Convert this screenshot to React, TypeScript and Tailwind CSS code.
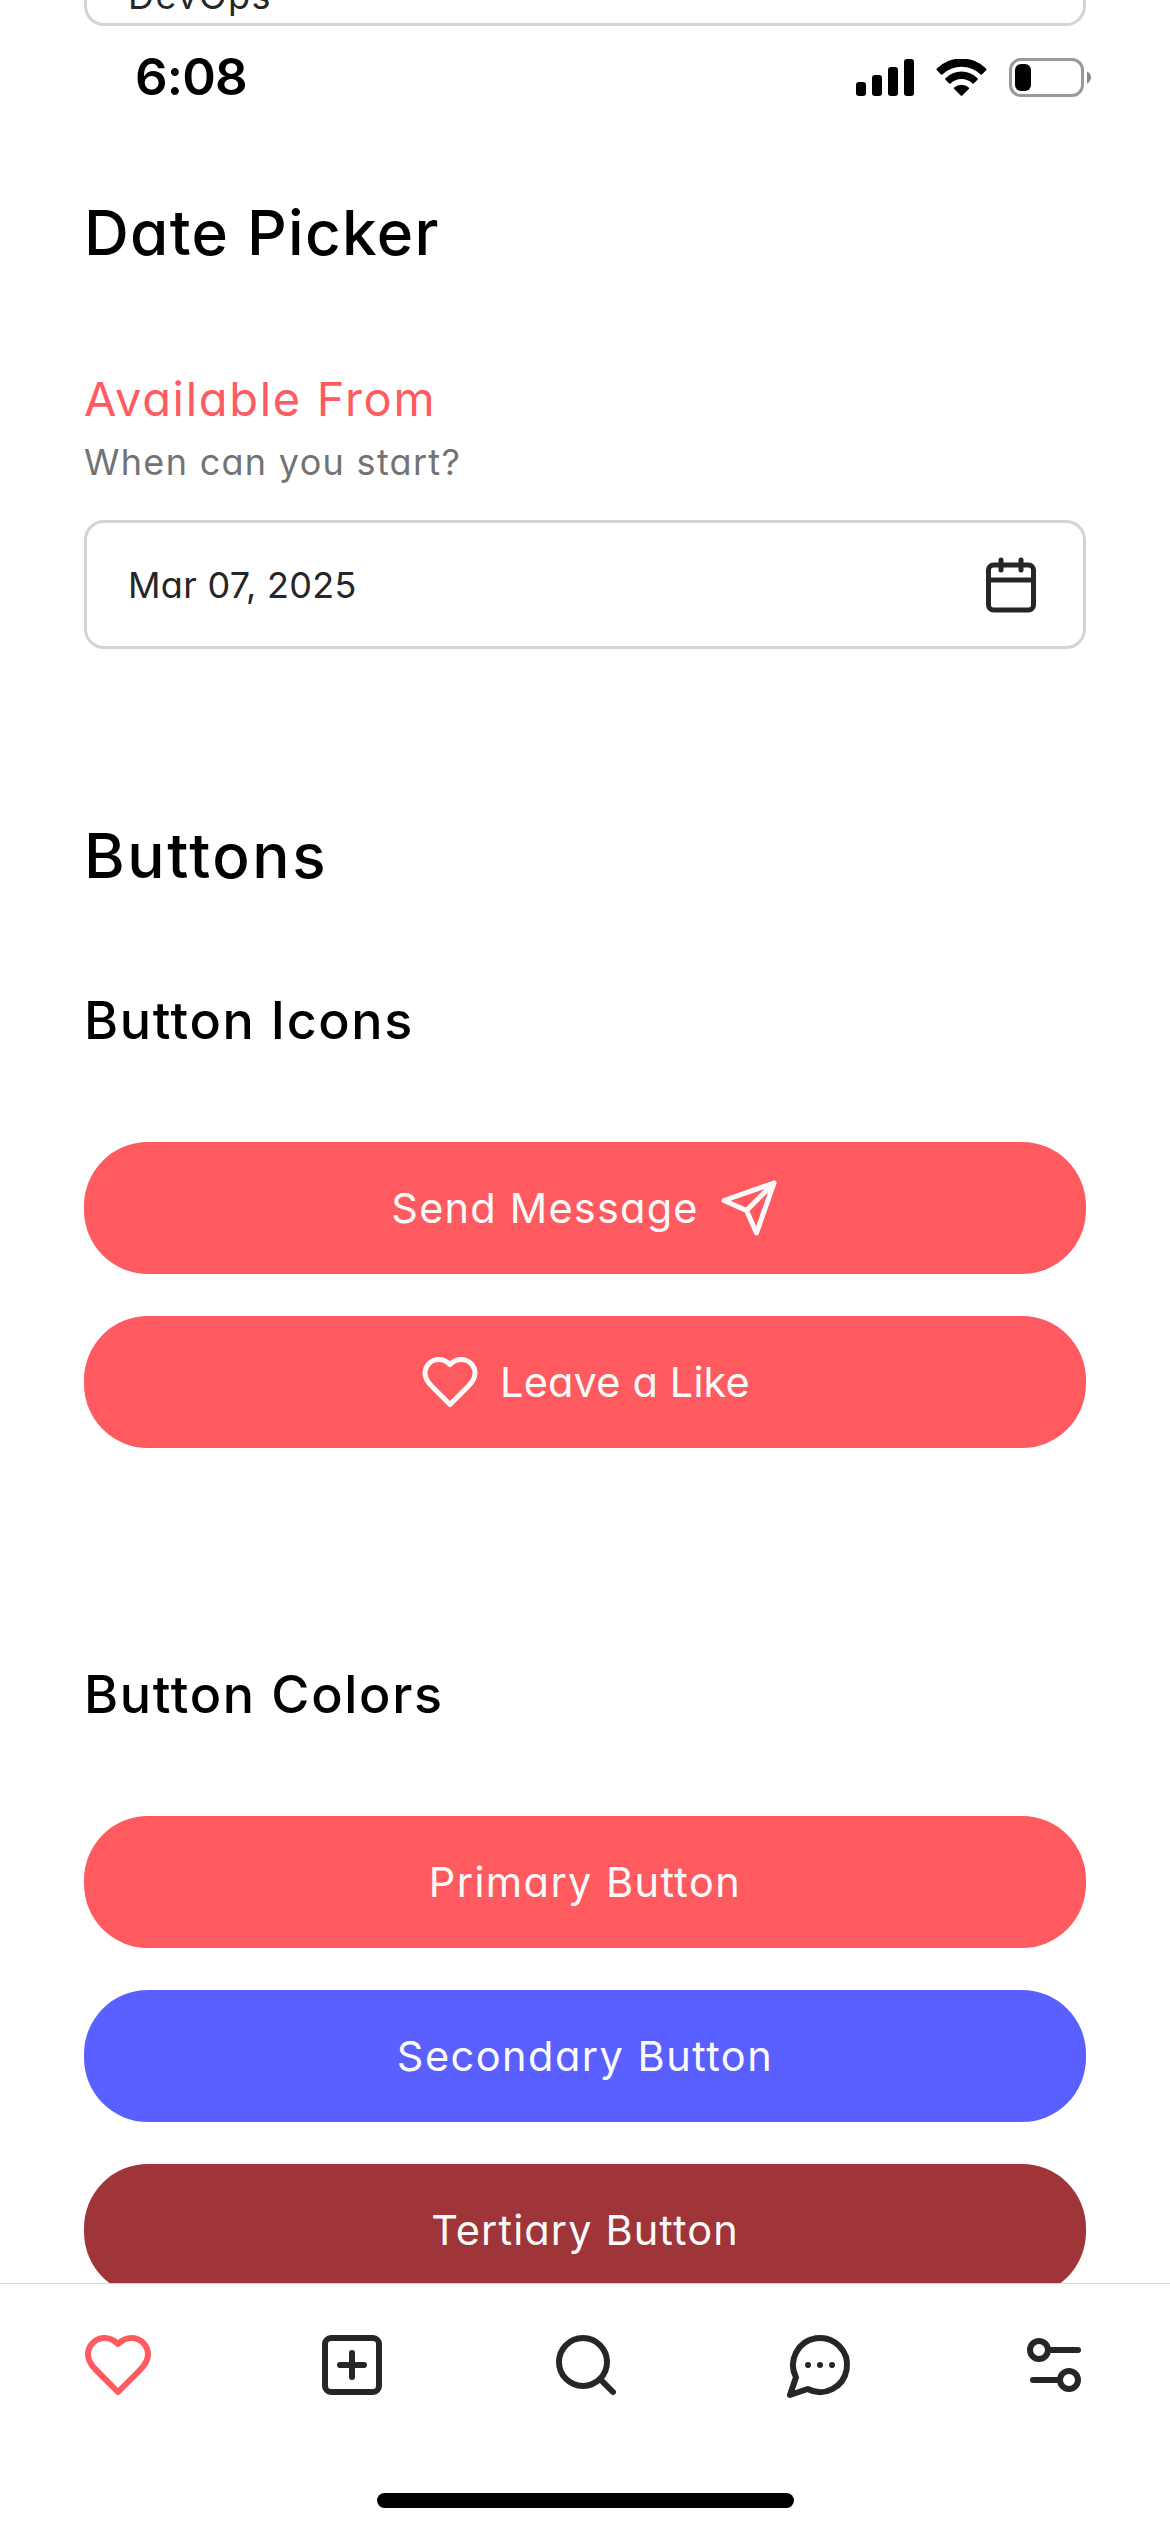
import { type ReactNode } from 'react';

function Icon({ size, className = '', children }: { size: number; className?: string; children: ReactNode }) {
  return (
    <svg width={size} height={size} viewBox="0 0 24 24" fill="none" stroke="currentColor" strokeWidth="2" strokeLinecap="round" strokeLinejoin="round" className={`shrink-0 ${className}`}>
      {children}
    </svg>
  );
}

const HEART = 'M19 14c1.49-1.46 3-3.21 3-5.5A5.5 5.5 0 0 0 16.5 3c-1.76 0-3 .5-4.5 2-1.5-1.5-2.74-2-4.5-2A5.5 5.5 0 0 0 2 8.5c0 2.3 1.5 4.05 3 5.5l7 7Z';

function StatusBar() {
  return (
    <header className="flex h-[103px] shrink-0 items-center justify-between pl-[135px] pr-[79px]">
      <span className="text-[51px] font-semibold tracking-[-0.84px]">6:08</span>
      <div className="flex items-center gap-[22px]">
        <svg width="58" height="37" viewBox="0 0 58 37">
          <rect x="0" y="23" width="10" height="14" rx="3" />
          <rect x="16" y="16" width="10" height="21" rx="3" />
          <rect x="32" y="8" width="10" height="29" rx="3" />
          <rect x="48" y="0" width="10" height="37" rx="3" />
        </svg>
        <svg width="51" height="37" viewBox="0 0 51 37">
          <path d="M.9 11.2q-.8-.8 0-1.6A35 35 0 0 1 50.1 9.6q.8.8 0 1.6L46.2 15.3q-.8.8-1.6.1A28 28 0 0 0 6.4 15.4q-.8.7-1.6-.1Z" />
          <path d="M9.5 20.7q-.8-.8 0-1.5A22.7 22.7 0 0 1 41.5 19.2q.8.7 0 1.5L38.1 24.3q-.8.8-1.6.1A15.7 15.7 0 0 0 14.5 24.4q-.8.7-1.6-.1Z" />
          <path d="M18.2 29.9q-.8-.8 0-1.4A11 11 0 0 1 32.8 28.500q.8.6 0 1.4L26.3 36.400q-.8.8-1.6 0Z" />
        </svg>
        <svg width="82" height="39" viewBox="0 0 82 39">
          <rect x="1.5" y="1.5" width="72" height="36" rx="10.5" fill="none" stroke="#999999" strokeWidth="3" />
          <rect x="6" y="6" width="16" height="27" rx="6" />
          <path d="M78 13.5c2.5 1 4 3.5 4 6s-1.5 5-4 6Z" fill="#8a8a8a" />
        </svg>
      </div>
    </header>
  );
}

function Button({ color, children }: { color: string; children: ReactNode }) {
  return (
    <button className={`flex h-[132px] w-full shrink-0 items-center justify-center gap-5 rounded-[64px] text-[41.5px] text-[#fafafa] ${color}`}>
      {children}
    </button>
  );
}

function TabBar() {
  return (
    <nav className="flex h-[249px] shrink-0 flex-col items-center justify-between border-t border-[#d8d8d8] bg-white pb-6 pt-[45px] text-[#262626]">
      <div className="flex w-full justify-between pl-[82px] pr-20">
        <Icon size={72} className="text-[#ff5a5f]"><path d={HEART} /></Icon>
        <Icon size={72}><rect x="3" y="3" width="18" height="18" rx="2" /><path d="M8 12h8M12 8v8" /></Icon>
        <Icon size={72}><circle cx="11" cy="11" r="8" /><path d="m21 21-4.3-4.3" /></Icon>
        <Icon size={72}><path d="M7.9 20A9 9 0 1 0 4 16.1L2 22ZM8 12h.01M12 12h.01M16 12h.01" /></Icon>
        <Icon size={72}><path d="M20 7h-9M14 17H5" /><circle cx="17" cy="17" r="3" /><circle cx="7" cy="7" r="3" /></Icon>
      </div>
      <div className="h-[15px] w-[417px] rounded-full bg-black" />
    </nav>
  );
}

export default function App() {
  return (
    <div className="flex h-[2532px] w-[1170px] flex-col overflow-hidden bg-white font-['Inter',sans-serif] text-black [font-feature-settings:'cv11']">
      <main className="flex h-[2283px] shrink-0 flex-col overflow-hidden">
        <div className="mx-[84px] flex h-[26px] shrink-0 items-end overflow-hidden rounded-b-[20px] border-3 border-t-0 border-[#d4d4d4] pb-[9px] pl-[41px] text-[36px] leading-[36px] text-[#262626]">
          <span className="tracking-[1.5px]">DevOps</span>
        </div>
        <StatusBar />
        <div className="flex shrink-0 flex-col px-[84px]">
          <h1 className="mt-[58px] text-[62px] leading-[91px] font-medium tracking-[1.3px]">Date Picker</h1>
          <label className="mt-[91px] text-[47px] leading-[60px] tracking-[1.7px] text-[#ff5a5f]">Available From</label>
          <p className="mt-2 text-[36px] leading-[50px] tracking-[1.3px] text-[#737373]">When can you start?</p>
          <div className="mt-[33px] flex h-[129px] items-center justify-between rounded-[20px] border-3 border-[#d4d4d4] pl-[41px] pr-[42px] text-[36px] text-[#262626]">
            <span className="tracking-[0.3px]">Mar 07, 2025</span>
            <Icon size={60}><path d="M8 2v4M16 2v4M3 10h18" /><rect x="3" y="4" width="18" height="18" rx="2" /></Icon>
          </div>

          <h1 className="mt-[161px] text-[62px] leading-[91px] font-medium tracking-[2.6px]">Buttons</h1>
          <h2 className="mt-[82px] text-[52px] leading-[76px] font-medium tracking-[1.63px]">Button Icons</h2>
          <div className="mt-[83px] flex flex-col gap-[42px]">
            <Button color="bg-[#ff5a5f]">
              <span className="tracking-[1.2px]">Send Message</span>
              <Icon size={60}><path d="m22 2-7 20-4-9-9-4ZM22 2 11 13" /></Icon>
            </Button>
            <Button color="bg-[#ff5a5f]">
              <Icon size={60}><path d={HEART} /></Icon>
              <span className="tracking-[0.15px]">Leave a Like</span>
            </Button>
          </div>

          <h2 className="mt-[209px] text-[52px] leading-[76px] font-medium tracking-[1.7px]">Button Colors</h2>
          <div className="mt-[83px] flex flex-col gap-[42px]">
            <Button color="bg-[#ff5a5f]"><span className="tracking-[1.4px]">Primary Button</span></Button>
            <Button color="bg-[#5a5fff]"><span className="tracking-[1.47px]">Secondary Button</span></Button>
            <Button color="bg-[#9f3538]"><span className="tracking-[1.1px]">Tertiary Button</span></Button>
          </div>
        </div>
      </main>
      <TabBar />
    </div>
  );
}
